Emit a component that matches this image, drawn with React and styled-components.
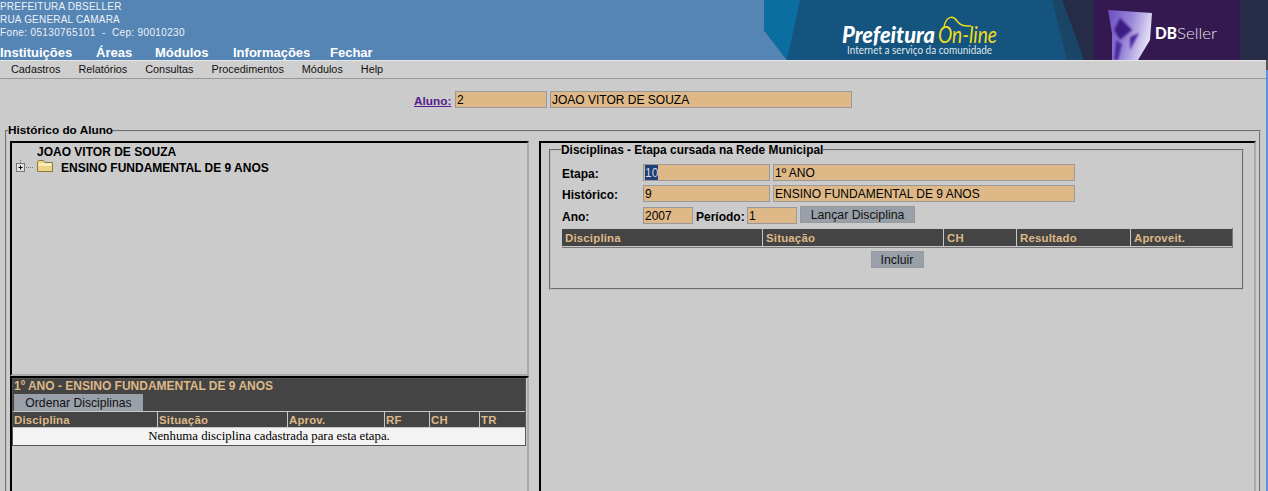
import styled, { createGlobalStyle } from 'styled-components'

const GlobalStyle = createGlobalStyle`
  html, body {
    margin: 0;
    padding: 0;
    height: 491px;
    overflow: hidden;
    background: #cbcbcb;
    font-family: "Liberation Sans", Arial, sans-serif;
    font-size: 11px;
    color: #000;
  }
`

const Page = styled.div`
  width: 1268px;
  height: 491px;
  overflow: hidden;
`

const Header = styled.header`
  display: flex;
  justify-content: space-between;
  height: 60px;
  background: #5585b5;
`

const HeaderText = styled.div`
  display: flex;
  flex-direction: column;
`

const Address = styled.div`
  color: #eef2f6;
  font-size: 10px;
  line-height: 13px;
  letter-spacing: 0.2px;
  height: 45px;
`

const Phone = styled.span`
  letter-spacing: 0.36px;
`

const TopNav = styled.nav`
  display: flex;
`

const TopLink = styled.a`
  color: #fff;
  font-size: 13px;
  font-weight: bold;
  line-height: 15px;
  width: ${p => p.$w}px;
`

const Body = styled.div`
  display: flex;
`

const Main = styled.main`
  width: 1266px;
  flex: none;
`

const EdgeStrip = styled.div`
  width: 2px;
  height: 431px;
  background: #5a8fe8;
  border-top: 10px solid #555;
  box-sizing: border-box;
`

const MenuBar = styled.div`
  display: flex;
  height: 17px;
  padding-left: 11px;
  background: #cfcfcf;
  border-top: 1px solid #e6e6e6;
  border-bottom: 1px solid #999;
  line-height: 17px;
  font-size: 10.85px;
  color: #111;
  gap: 18px;
`

const StudentRow = styled.div`
  display: flex;
  align-items: center;
  height: 17px;
  margin-top: 12px;
  padding-left: 414px;
`

const StudentLink = styled.a`
  color: #551a8b;
  font-size: 11.8px;
  font-weight: bold;
  text-decoration: underline;
  width: 41px;
  padding-top: 2px;
`

const Input = styled.div`
  box-sizing: border-box;
  flex: none;
  width: ${p => p.$w}px;
  height: 17px;
  margin-right: ${p => p.$mr || 0}px;
  padding-left: 1px;
  background: #deb887;
  border: 1px solid #999;
  font-size: 12px;
  line-height: 17px;
  color: #000;
  white-space: nowrap;
`

const Selected = styled.span`
  display: inline-block;
  height: 15px;
  vertical-align: top;
  background: #1f3f77;
  color: #cfd8e8;
`

const OuterSet = styled.fieldset`
  box-sizing: border-box;
  width: 1255px;
  height: 380px;
  margin: 16px 0 0 5px;
  padding: 0 3px;
  border: 2px groove #c4c4c4;
  display: flex;
`

const OuterLegend = styled.legend`
  padding: 0;
  margin-left: -2px;
  font-size: 11.8px;
  font-weight: bold;
  line-height: 13px;
`

const Columns = styled.div`
  display: flex;
  gap: 10px;
  margin-top: 4px;
`

const LeftColumn = styled.div`
  display: flex;
  flex-direction: column;
  width: 519px;
`

const Panel = styled.div`
  box-sizing: border-box;
  border-style: solid;
  border-width: 2px;
  border-color: #000 #aaa #aaa #000;
  width: ${p => p.$w}px;
  height: ${p => p.$h}px;
  flex: none;
`

const TreeName = styled.div`
  font-size: 12px;
  font-weight: bold;
  line-height: 13px;
  margin: 3px 0 0 25px;
`

const TreeRow = styled.div`
  display: flex;
  align-items: center;
  height: 16px;
  margin-left: 4px;
  font-size: 12px;
  font-weight: bold;
`

const TreeLabel = styled.span`
  margin-left: 8px;
  padding-top: 2px;
`

const GradeBox = styled.div`
  background: #444;
  border: 1px solid #555;
  width: 514px;
  height: 68px;
  box-sizing: border-box;
  display: flex;
  flex-direction: column;
`

const GradeTitle = styled.div`
  color: #deb887;
  font-size: 12px;
  font-weight: bold;
  line-height: 15px;
  padding-left: 1px;
  height: 15px;
`

const Tab = styled.div`
  width: 129px;
  height: 17px;
  margin-left: 1px;
  background: #9aa0aa;
  text-align: center;
  line-height: 18px;
  font-size: 12.2px;
  color: #111;
`

const HeadRow = styled.div`
  display: flex;
  border-top: 1px solid #c8c8c8;
  border-bottom: 1px solid #c8c8c8;
  background: #444;
  height: ${p => p.$h}px;
  box-sizing: border-box;
`

const HeadCell = styled.div`
  flex: none;
  box-sizing: border-box;
  width: ${p => p.$w}px;
  padding-left: ${p => p.$pad}px;
  border-right: 1px solid #c8c8c8;
  color: #deb887;
  font-size: 11.4px;
  font-weight: bold;
  line-height: ${p => p.$lh}px;
  letter-spacing: 0.2px;
  &:last-child {
    border-right: 0;
  }
`

const EmptyRow = styled.div`
  height: 17px;
  background: #f3f3f3;
  text-align: center;
  font-family: "Liberation Serif", "Times New Roman", serif;
  font-size: 12.8px;
  line-height: 17px;
`

const InnerSet = styled.fieldset`
  box-sizing: border-box;
  width: 695px;
  height: 147px;
  margin: 0 0 0 8px;
  padding: 0 0 0 11px;
  border: 2px groove #c0c0c0;
`

const InnerLegend = styled.legend`
  padding: 1px 0 0;
  margin-left: -1px;
  font-size: 11.9px;
  font-weight: bold;
  line-height: 13px;
`

const FormRow = styled.div`
  display: flex;
  align-items: center;
  height: 17px;
  margin-top: ${p => p.$mt}px;
`

const FieldLabel = styled.label`
  font-size: 12px;
  font-weight: bold;
  width: ${p => p.$w}px;
  flex: none;
  padding-top: 2px;
`

const Button = styled.button`
  box-sizing: border-box;
  flex: none;
  width: ${p => p.$w}px;
  height: 17px;
  margin-top: ${p => p.$mt || 0}px;
  padding: 0;
  background: #9aa0aa;
  border: 1px solid #999;
  font-family: inherit;
  font-size: 12.3px;
  color: #111;
`

const GridBox = styled.div`
  width: 670px;
  margin-top: 4px;
  border-bottom: 1px solid #777;
  border-right: 1px solid #777;
`

const IncluirRow = styled.div`
  display: flex;
  justify-content: center;
  width: 670px;
  margin-top: 3px;
`

const Banner = () => (
  <svg width="504" height="60" viewBox="0 0 504 60" style={{ display: 'block', flex: 'none' }}>
    <defs>
      <linearGradient id="logoFace" x1="0" y1="0" x2="1" y2="0.3">
        <stop offset="0" stopColor="#6a4cc0" />
        <stop offset="0.55" stopColor="#9a88d8" />
        <stop offset="1" stopColor="#e2def4" />
      </linearGradient>
      <filter id="soft" x="-20%" y="-20%" width="140%" height="140%">
        <feGaussianBlur stdDeviation="0.9" />
      </filter>
    </defs>
    <polygon points="0,0 504,0 504,60 23,60 0,30" fill="#262b48" />
    <polygon points="0,0 40,0 23,60 0,30" fill="#0a6fa0" />
    <polygon points="36,0 298,0 320,60 23,60" fill="#14547f" />
    <polygon points="288,0 298,0 320,60 303,60" fill="#1b4566" />
    <rect x="330" width="146" height="60" fill="#33194f" />
    <polygon points="344,10 388,13 386,40 374,60 348,60 348,33" fill="url(#logoFace)" />
    <g filter="url(#soft)">
      <polygon points="356,18 368,30 356,40 350,30" fill="#3d1f86" />
      <polygon points="366,37 375,33 366,50" fill="#4a2c9c" />
      <polygon points="352,40 358,44 354,60 350,60" fill="#4a2c9c" />
    </g>
    <text x="78" y="43" fontFamily="Lato" fontStyle="italic" fontWeight="900" fontSize="23" fill="#fff" textLength="93" lengthAdjust="spacingAndGlyphs">Prefeitura</text>
    <text x="174" y="43" fontFamily="Lato" fontStyle="italic" fontWeight="400" fontSize="24" fill="#f2dc1c" textLength="59" lengthAdjust="spacingAndGlyphs">On-line</text>
    <path d="M180 27c2-11 9-12 13-6 3 4 5 5 14 5" fill="none" stroke="#f2dc1c" strokeWidth="1.5" />
    <text x="83" y="54" fontFamily="Lato" fontSize="10.5" fill="#dfe6ec" textLength="145" lengthAdjust="spacingAndGlyphs">Internet a serviço da comunidade</text>
    <text x="391" y="39" fontFamily="Lato" fontWeight="900" fontSize="16" fill="#fff" textLength="22" lengthAdjust="spacingAndGlyphs">DB</text>
    <text x="413" y="39" fontFamily="Lato" fontWeight="300" fontSize="16" fill="#e4e0ee" textLength="40" lengthAdjust="spacingAndGlyphs">Seller</text>
  </svg>
)

const TreeIcons = () => (
  <svg width="37" height="14" viewBox="0 0 37 14" style={{ flex: 'none' }}>
    <path d="M4.500 0v3M10 7.500h8" stroke="#777" strokeDasharray="1 1" fill="none" />
    <rect x="0.500" y="3.500" width="8" height="8" fill="#e0e0e0" stroke="#777" />
    <path d="M2.500 7.500h4M4.500 5.500v4" stroke="#000" fill="none" />
    <path d="M21.500 1.500 l1-1h5l1.500 2h7.500v9h-15z" fill="#eed586" stroke="#8a7a40" />
    <path d="M22.500 3.500h13v2h-13z" fill="#fff6cc" />
  </svg>
)

const topLinks = [['Instituições', 96], ['Áreas', 59], ['Módulos', 78], ['Informações', 97], ['Fechar', 60]]
const menuItems = ['Cadastros', 'Relatórios', 'Consultas', 'Procedimentos', 'Módulos', 'Help']
const gradeColumns = [['Disciplina', 145], ['Situação', 130], ['Aprov.', 97], ['RF', 45], ['CH', 50], ['TR', 45]]
const subjectColumns = [['Disciplina', 201], ['Situação', 181], ['CH', 73], ['Resultado', 114], ['Aproveit.', 100]]

const App = () => (
  <Page>
    <GlobalStyle />
    <Header>
      <HeaderText>
        <Address>
          PREFEITURA DBSELLER<br />
          RUA GENERAL CAMARA<br />
          <Phone>Fone: 05130765101 &nbsp;-&nbsp; Cep: 90010230</Phone>
        </Address>
        <TopNav>
          {topLinks.map(([label, w]) => <TopLink key={label} $w={w}>{label}</TopLink>)}
        </TopNav>
      </HeaderText>
      <Banner />
    </Header>
    <Body>
      <Main>
        <MenuBar>
          {menuItems.map(item => <span key={item}>{item}</span>)}
        </MenuBar>

        <StudentRow>
          <StudentLink href="#">Aluno:</StudentLink>
          <Input $w={92} $mr={3}>2</Input>
          <Input $w={302}>JOAO VITOR DE SOUZA</Input>
        </StudentRow>

        <OuterSet>
          <OuterLegend>Histórico do Aluno</OuterLegend>
          <Columns>
            <LeftColumn>
              <Panel $w={519} $h={235}>
                <TreeName>JOAO VITOR DE SOUZA</TreeName>
                <TreeRow>
                  <TreeIcons />
                  <TreeLabel>ENSINO FUNDAMENTAL DE 9 ANOS</TreeLabel>
                </TreeRow>
              </Panel>
              <Panel $w={519} $h={130}>
                <GradeBox>
                  <GradeTitle>1º ANO - ENSINO FUNDAMENTAL DE 9 ANOS</GradeTitle>
                  <Tab>Ordenar Disciplinas</Tab>
                  <HeadRow $h={17}>
                    {gradeColumns.map(([label, w]) => <HeadCell key={label} $w={w} $lh={16} $pad={1}>{label}</HeadCell>)}
                  </HeadRow>
                  <EmptyRow>Nenhuma disciplina cadastrada para esta etapa.</EmptyRow>
                </GradeBox>
              </Panel>
            </LeftColumn>
            <Panel $w={717} $h={365}>
              <InnerSet>
                <InnerLegend>Disciplinas - Etapa cursada na Rede Municipal</InnerLegend>
                <FormRow $mt={7}>
                  <FieldLabel $w={81}>Etapa:</FieldLabel>
                  <Input $w={127} $mr={3}><Selected>10</Selected></Input>
                  <Input $w={302}>1º ANO</Input>
                </FormRow>
                <FormRow $mt={4}>
                  <FieldLabel $w={81}>Histórico:</FieldLabel>
                  <Input $w={127} $mr={3}>9</Input>
                  <Input $w={302}>ENSINO FUNDAMENTAL DE 9 ANOS</Input>
                </FormRow>
                <FormRow $mt={5}>
                  <FieldLabel $w={81}>Ano:</FieldLabel>
                  <Input $w={50} $mr={3}>2007</Input>
                  <FieldLabel $w={51}>Período:</FieldLabel>
                  <Input $w={50} $mr={3}>1</Input>
                  <Button $w={115} $mt={-2}>Lançar Disciplina</Button>
                </FormRow>
                <GridBox>
                  <HeadRow $h={19}>
                    {subjectColumns.map(([label, w]) => <HeadCell key={label} $w={w} $lh={18} $pad={3}>{label}</HeadCell>)}
                  </HeadRow>
                </GridBox>
                <IncluirRow>
                  <Button $w={53}>Incluir</Button>
                </IncluirRow>
              </InnerSet>
            </Panel>
          </Columns>
        </OuterSet>
      </Main>
      <EdgeStrip />
    </Body>
  </Page>
)

export default App
